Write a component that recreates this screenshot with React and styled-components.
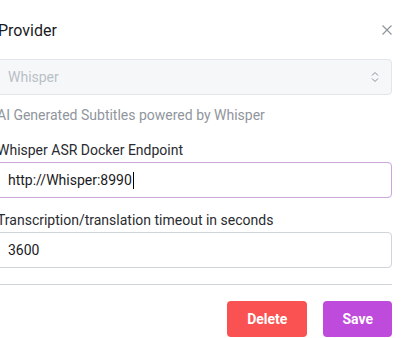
import React from "react";
import styled, { createGlobalStyle } from "styled-components";

const Global = createGlobalStyle`
  html, body { margin: 0; padding: 0; background: #fff; }
  body { font-family: Roboto, "Noto Sans", sans-serif; overflow: hidden; }
  * { box-sizing: border-box; }
`;

const Modal = styled.div`
  width: 397px;
  margin-left: -5px;
  padding-top: 20px;
  display: flex;
  flex-direction: column;
`;

const Header = styled.div`
  display: flex;
  align-items: center;
  justify-content: space-between;
  height: 20px;
  margin-bottom: 19px;
`;

const Title = styled.h2`
  margin: 1px 0 0 3px;
  font-size: 16px;
  font-weight: 400;
  line-height: 20px;
  color: #1a1b1e;
`;

const CloseButton = styled.button`
  border: 0;
  background: none;
  padding: 0;
  width: 10px;
  height: 10px;
  display: flex;
  color: #8c939b;
  cursor: pointer;
`;

const Box = styled.div`
  height: 36px;
  border-radius: 4px;
  border: 1px solid ${(p) => p.$border};
  background: ${(p) => p.$bg || "#fff"};
  padding: 0 12px;
  display: flex;
  align-items: center;
  font-size: 14px;
  color: ${(p) => p.$color || "#1a1b1e"};
`;

const Value = styled.span`
  flex: 1;
  white-space: nowrap;
  display: flex;
  align-items: center;
`;

const Caret = styled.span`
  display: inline-block;
  width: 1px;
  height: 17px;
  background: #000;
  margin-left: 1px;
`;

const Description = styled.div`
  font-size: 14px;
  color: #8f969d;
  line-height: 20px;
  margin: 10px 0 0 2px;
`;

const Label = styled.label`
  display: block;
  font-size: 14px;
  line-height: 20px;
  color: #2a2b30;
  margin: ${(p) => p.$mt}px 0 2px 2px;
`;

const Divider = styled.hr`
  border: 0;
  border-top: 1px solid #ced4da;
  margin: 16px 0 16px;
  width: 100%;
`;

const Footer = styled.div`
  display: flex;
  justify-content: flex-end;
  gap: 16px;
`;

const Button = styled.button`
  height: 36px;
  padding: 0 ${(p) => p.$px}px;
  border: 0;
  border-radius: 4px;
  background: ${(p) => p.$bg};
  color: #fff;
  font-family: Roboto, sans-serif;
  font-weight: 700;
  font-size: 14px;
  cursor: pointer;
`;

export default function App() {
  return (
    <>
      <Global />
      <Modal>
        <Header>
          <Title>Provider</Title>
          <CloseButton aria-label="Close">
            <svg width="10" height="10" viewBox="0 0 10 10">
              <path d="M0.5 0.5 L9.5 9.5 M9.5 0.5 L0.5 9.5" stroke="currentColor" strokeWidth="1.1" fill="none" />
            </svg>
          </CloseButton>
        </Header>
        <Box $border="#e2e5e9" $bg="#f6f7f9" $color="#b9bfc6">
          <Value>Whisper</Value>
          <svg width="8" height="12" viewBox="0 0 8 12">
            <path d="M1 4.5 L4 1.5 L7 4.5 M1 7.5 L4 10.5 L7 7.5" stroke="#868e96" strokeWidth="1" fill="none" />
          </svg>
        </Box>
        <Description>AI Generated Subtitles powered by Whisper</Description>
        <Label $mt={15}>Whisper ASR Docker Endpoint</Label>
        <Box $border="#c9a6dc">
          <Value>http://Whisper:8990<Caret /></Value>
        </Box>
        <Label $mt={12}>Transcription/translation timeout in seconds</Label>
        <Box $border="#ced4da">
          <Value>3600</Value>
        </Box>
        <Divider />
        <Footer>
          <Button $bg="#fa5252" $px={20}>Delete</Button>
          <Button $bg="#be4bdb" $px={19}>Save</Button>
        </Footer>
      </Modal>
    </>
  );
}
